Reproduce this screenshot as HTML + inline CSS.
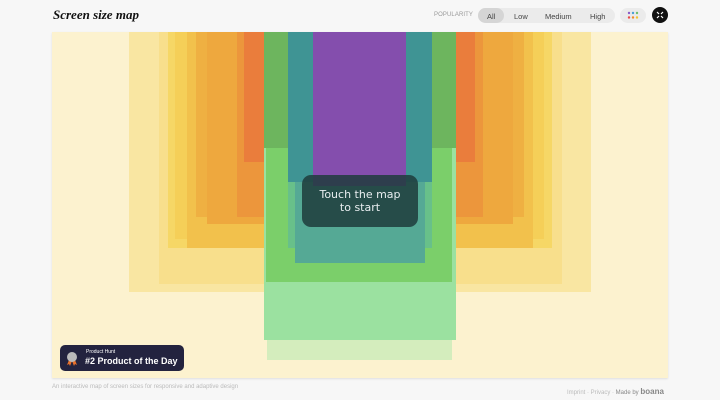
<!DOCTYPE html>
<html><head><meta charset="utf-8"><style>
*{margin:0;padding:0;box-sizing:border-box}
body{width:720px;height:400px;background:#f7f7f7;font-family:"Liberation Sans",sans-serif;position:relative;overflow:hidden}
.r{position:absolute;top:32px}
.t{position:absolute}
</style></head><body>
<div class="t" style="left:53px;top:7px;font-family:'Liberation Serif',serif;font-style:italic;font-weight:bold;font-size:13px;color:#111">Screen size map</div>
<div class="t" style="left:434px;top:12px;font-size:6px;color:#999;letter-spacing:.1px">POPULARITY</div>
<div class="t" style="left:478px;top:8px;width:137px;height:15px;background:#ebebeb;border-radius:8px;font-size:7.5px;color:#444">
 <div class="t" style="left:0;top:0;width:26px;height:15px;background:#d5d5d5;border-radius:8px"></div>
 <span class="t" style="left:9px;top:4px">All</span><span class="t" style="left:36px;top:4px">Low</span><span class="t" style="left:67px;top:4px">Medium</span><span class="t" style="left:112px;top:4px">High</span>
</div>
<div class="t" style="left:620px;top:8px;width:26px;height:15px;background:#ebebeb;border-radius:8px"></div>
<svg class="t" style="left:627px;top:11px" width="12" height="9"><g>
<circle cx="2" cy="2" r="1.2" fill="#8a5cc8"/><circle cx="6" cy="2" r="1.2" fill="#4aa0d8"/><circle cx="10" cy="2" r="1.2" fill="#6cc06c"/>
<circle cx="2" cy="6.5" r="1.2" fill="#e84a4a"/><circle cx="6" cy="6.5" r="1.2" fill="#f08a2a"/><circle cx="10" cy="6.5" r="1.2" fill="#f4c430"/></g></svg>
<svg class="t" style="left:652px;top:7px" width="16" height="16"><circle cx="8" cy="8" r="8" fill="#111"/><path d="M5 5l2 2M11 5l-2 2M5 11l2-2M11 11l-2-2" stroke="#fff" stroke-width="1.2"/></svg>

<div class="t" style="left:52px;top:32px;width:616px;height:346px;background:#fcf2cf;overflow:hidden;box-shadow:0 1px 2px rgba(0,0,0,.1)">
<div style="position:absolute;left:-52px;top:-32px;width:720px;height:400px">
<div class="r" style="left:129px;width:462px;height:260px;background:#f9e6a2"></div>
<div class="r" style="left:159px;width:403px;height:252px;background:#f8df8c"></div>
<div class="r" style="left:168px;width:384px;height:216px;background:#f6d766"></div>
<div class="r" style="left:175px;width:369px;height:207px;background:#f5cf58"></div>
<div class="r" style="left:187px;width:346px;height:216px;background:#f2c14c"></div>
<div class="r" style="left:196px;width:328px;height:185px;background:#efb042"></div>
<div class="r" style="left:207px;width:306px;height:192px;background:#eea83e"></div>
<div class="r" style="left:237px;width:246px;height:185px;background:#ec963c"></div>
<div class="r" style="left:244px;width:231px;height:130px;background:#ea7d3c"></div>
<div class="r" style="left:267px;width:185px;height:328px;background:#d4edbd"></div>
<div class="r" style="left:264px;width:192px;height:308px;background:#9be1a0"></div>
<div class="r" style="left:266px;width:186px;height:250px;background:rgba(120,205,100,.9)"></div>
<div class="r" style="left:264px;width:192px;height:116px;background:#6db55e"></div>
<div class="r" style="left:288px;width:144px;height:216px;background:#68c08a"></div>
<div class="r" style="left:295px;width:130px;height:231px;background:#55a995"></div>
<div class="r" style="left:288px;width:144px;height:150px;background:#3f9494"></div>
<div class="r" style="left:313px;width:93px;height:154px;background:#844ead"></div>
<div class="t" style="left:302px;top:175px;width:116px;height:52px;background:rgba(30,60,60,.85);border-radius:9px;color:#e8eef0;font-size:11px;text-align:center;line-height:13px;padding-top:13px;font-family:'DejaVu Sans',sans-serif">Touch the map<br>to start</div>
<div class="t" style="left:60px;top:345px;width:124px;height:26px;background:#23233f;border-radius:5px">
 <svg class="t" style="left:6px;top:5px" width="12" height="16"><path d="M3 10l-2 5 2-1 1 2 2-5zM9 10l2 5-2-1-1 2-2-5z" fill="#e8702a"/><circle cx="6" cy="7" r="5" fill="#bbb"/></svg>
 <div class="t" style="left:26px;top:4px;font-size:5px;color:#fff">Product Hunt</div>
 <div class="t" style="left:25px;top:11px;font-size:9px;font-weight:bold;color:#fff">#2 Product of the Day</div>
</div>
</div></div>
<div class="t" style="left:52px;top:384px;font-size:6px;color:#bbb">An interactive map of screen sizes for responsive and adaptive design</div>
<div class="t" style="left:567px;top:387px;font-size:6px;color:#bbb">Imprint · Privacy · <span style="color:#888">Made by</span> <b style="font-size:8px;color:#888">boana</b></div>
</body></html>
